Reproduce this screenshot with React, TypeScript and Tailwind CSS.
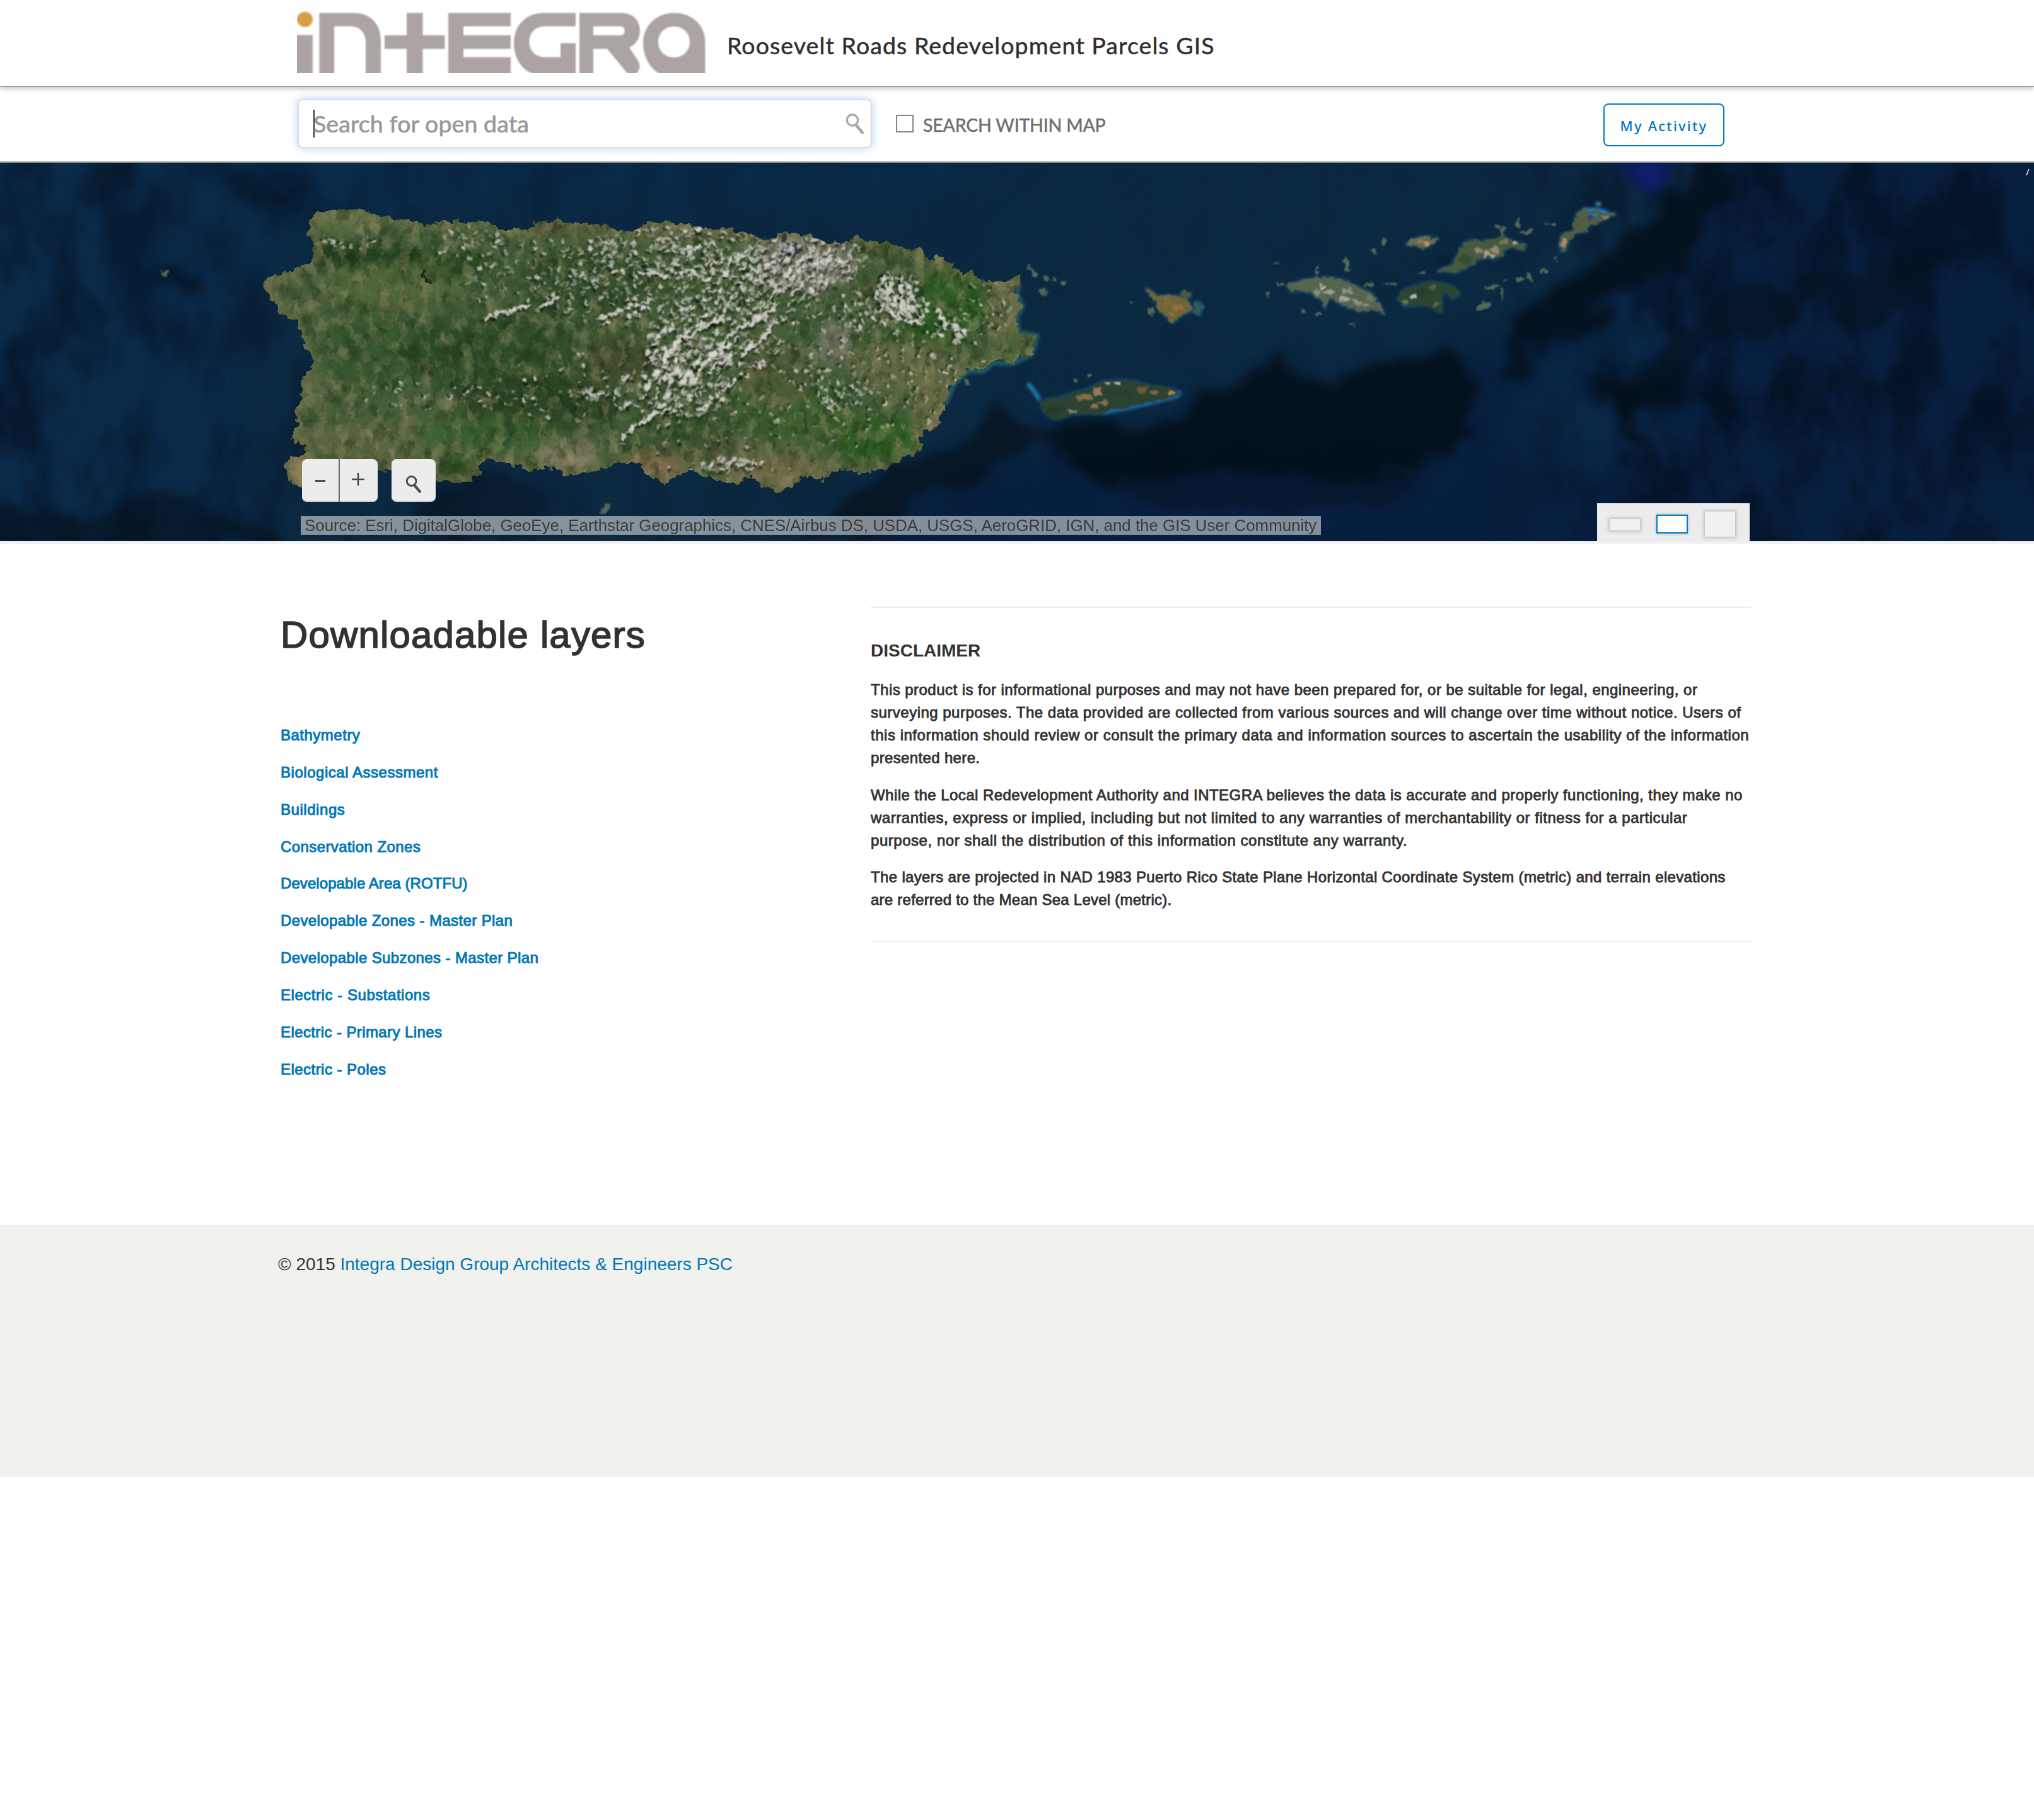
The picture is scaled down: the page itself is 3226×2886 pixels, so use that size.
import React from "react";

const PR =
  "M415 446L436 437L466 429L485 417L497 409L498 389L489 370L492 350L498 341L507 337L538 332L560 331L579 333L604 339L624 348L650 351L676 356L706 353L736 352L767 350L782 354L795 364L839 365L849 354L870 351L890 349L920 355L951 355L975 364L1002 368L1015 359L1028 354L1058 350L1080 355L1104 357L1130 364L1145 360L1165 369L1196 370L1203 378L1228 380L1241 368L1272 371L1312 384L1345 386L1353 375L1380 382L1410 384L1427 393L1459 396L1468 408L1482 414L1490 405L1502 414L1515 425L1533 434L1541 430L1552 443L1582 448L1605 445L1617 432L1620 443L1608 461L1622 486L1611 504L1614 527L1630 530L1645 532L1638 548L1637 562L1622 565L1605 575L1590 571L1576 573L1559 587L1536 586L1524 600L1513 607L1504 622L1499 643L1492 660L1490 675L1465 684L1460 700L1462 714L1448 720L1433 725L1421 736L1400 744L1381 749L1352 748L1330 743L1318 752L1307 761L1292 758L1278 754L1255 770L1232 780L1210 768L1186 755L1169 768L1145 762L1123 757L1108 752L1100 745L1089 746L1070 757L1056 767L1040 760L1022 750L1015 741L1007 734L982 734L960 741L936 750L915 750L895 755L892 747L885 743L865 742L844 748L828 743L813 734L788 734L778 723L770 730L757 739L762 748L752 757L727 766L691 761L655 755L619 746L594 746L540 752L500 745L482 775L470 768L460 765L456 754L452 740L456 729L470 725L484 721L484 704L461 698L465 685L471 671L469 657L476 645L479 632L477 618L479 604L488 590L497 571L490 560L484 546L476 526L471 507L441 496L434 482L425 468Z";

const ISLANDS = [
  "M2041 453L2060 446L2079 443L2100 440L2128 443L2146 453L2173 463L2187 480L2195 497L2180 489L2160 493L2140 488L2128 483L2115 473L2105 474L2101 489L2098 476L2084 467L2070 460L2048 463Z",
  "M2218 473L2227 460L2240 456L2254 450L2270 448L2289 450L2306 456L2314 467L2303 473L2291 460L2284 470L2286 484L2285 495L2270 485L2258 483L2240 484L2227 485Z",
  "M2280 430L2303 420L2310 408L2316 397L2320 388L2329 382L2350 383L2379 380L2384 372L2390 381L2410 385L2420 389L2416 397L2400 391L2387 393L2383 404L2370 410L2357 407L2343 413L2325 425L2307 433L2296 429Z",
  "M2231 387L2244 379L2262 375L2280 378L2272 386L2258 392Z",
  "M2475 397L2474 385L2477 373L2495 367L2497 355L2499 345L2503 338L2512 333L2524 336L2530 331L2545 338L2562 339L2540 350L2530 355L2519 355L2517 367L2500 369L2490 377L2486 388L2483 398Z",
  "M1818 457L1828 464L1835 471L1850 469L1865 470L1881 475L1886 484L1889 493L1874 500L1868 504L1861 512L1850 502L1838 489L1834 478Z",
  "M1872 466L1880 463L1889 468L1882 473Z",
  "M1895 480L1903 478L1907 488L1902 500L1895 496Z",
  "M1651 639L1662 634L1680 631L1703 623L1725 618L1749 605L1775 603L1800 605L1830 614L1863 618L1872 625L1845 633L1818 637L1790 645L1760 648L1748 656L1730 655L1700 656L1680 664L1668 662L1657 654Z",
];
const ISLAND_FILLS = ["#566450", "#2b4531", "#47593e", "#6b6a4c", "#525d43", "#6f6538", "#4f5a40", "#2f5a5a", "#2c4230"];

// [cx, cy, rx, ry, rotation]
const CAYS = [
  [2136, 419, 4, 12, -8], [2090, 428, 2, 9, 0], [2195, 385, 4, 6, 0], [2180, 397, 3, 3, 0],
  [2024, 417, 3, 3, 0], [2011, 467, 3, 5, 20], [2030, 450, 5, 2, 20], [2172, 452, 9, 3, 0],
  [2205, 450, 12, 2, -8], [2256, 432, 6, 3, -10], [2353, 486, 13, 5, -20], [2382, 465, 3, 10, 0],
  [2367, 455, 13, 3, -15], [2412, 442, 6, 4, -20], [2426, 439, 3, 9, -25], [2448, 430, 7, 3, -20],
  [2387, 446, 3, 2, 0], [2408, 354, 3, 9, 0], [2375, 360, 3, 4, 0], [2383, 365, 5, 7, 20],
  [2420, 368, 12, 3, -10], [2464, 356, 5, 2, 0], [2454, 356, 2, 2, 0], [2146, 514, 4, 2, 0],
  [2068, 493, 3, 3, 0], [2468, 408, 2, 4, 0], [1631, 424, 3, 3, 0], [1640, 432, 8, 4, 50],
  [1660, 441, 5, 3, 40], [1672, 444, 4, 3, 20], [1685, 449, 5, 3, 20], [1654, 462, 5, 7, 0],
  [1795, 478, 3, 3, 0], [1826, 493, 4, 8, 0], [262, 434, 5, 4, 0], [960, 807, 5, 11, 40],
  [1728, 595, 2, 4, 0], [1707, 604, 2, 3, 0], [1534, 606, 3, 5, 0], [2092, 497, 4, 3, 0],
];

// Patches of detail inside the smaller islands: [cx, cy, rx, ry, colour]
const SPECKS: [number, number, number, number, string][] = [
  [2098, 455, 6, 4, "#c9c8c0"], [2090, 463, 7, 4, "#8f9a84"], [2108, 463, 9, 5, "#a3a798"], [2138, 462, 12, 6, "#9a9e8c"],
  [2132, 474, 9, 4, "#b0b2a6"], [2152, 478, 9, 5, "#949a86"], [2172, 474, 8, 6, "#6f7a5c"], [2165, 484, 9, 4, "#a1a190"],
  [2120, 450, 8, 4, "#5d6a48"], [2062, 452, 12, 5, "#5a6745"], [2128, 478, 6, 3, "#7d8a76"],
  [2243, 470, 5, 4, "#c6ccc2"], [2228, 478, 6, 5, "#6f7f66"], [2255, 462, 14, 8, "#24402a"], [2272, 455, 8, 5, "#5f6a48"], [2278, 482, 5, 7, "#6a6b50"],
  [2325, 412, 12, 10, "#2f4c2c"], [2345, 398, 8, 6, "#a08d78"], [2358, 402, 7, 6, "#c2a695"], [2372, 396, 9, 7, "#a98f78"], [2368, 407, 6, 3, "#b9a596"], [2402, 386, 6, 4, "#c8ac9c"], [2385, 384, 8, 4, "#8a7d5e"],
  [2256, 384, 10, 4, "#97805a"], [2264, 388, 4, 3, "#c29a72"],
  [2481, 385, 4, 10, "#bd9176"], [2505, 352, 7, 9, "#4f5d3a"], [2530, 340, 9, 5, "#2277b8"], [2522, 345, 6, 4, "#1d3f8a"], [2546, 343, 7, 3, "#a0896a"],
  [1850, 482, 9, 6, "#8a6a35"], [1868, 488, 11, 6, "#9a7440"], [1858, 498, 6, 5, "#8b7a48"], [1848, 473, 6, 3, "#6a8a68"],
  [1672, 650, 14, 8, "#24392a"], [1722, 630, 16, 6, "#8f7450"], [1742, 620, 9, 8, "#a98360"], [1750, 638, 12, 5, "#8e7150"], [1735, 644, 8, 4, "#a07c5a"],
  [1778, 625, 22, 9, "#2b3d2c"], [1812, 618, 12, 7, "#7a6038"], [1832, 622, 10, 5, "#8a6c42"], [1858, 622, 8, 5, "#b59055"], [1772, 608, 6, 4, "#d5d0c8"], [1756, 608, 5, 4, "#c0a890"], [1700, 652, 10, 3, "#a58766"],
];

function makeRandom(seed: number) {
  let s = seed;
  return () => {
    s = (s * 1664525 + 1013904223) % 4294967296;
    return s / 4294967296;
  };
}

// [cx, cy, rx, ry, count, length, angle]
const CLOUD_FIELDS = [
  [1090, 400, 170, 44, 290, 5, -12],
  [740, 386, 60, 26, 45, 3.5, 30],
  [850, 440, 110, 62, 90, 4, -5],
  [1000, 460, 130, 60, 150, 4.5, -25],
  [1130, 540, 110, 80, 240, 6.5, -42],
  [1090, 600, 80, 60, 150, 6.5, -58],
  [1190, 460, 110, 60, 220, 5.5, -45],
  [1250, 430, 100, 44, 200, 6, -60],
  [1310, 412, 65, 45, 110, 5.5, -75],
  [1425, 470, 36, 42, 60, 7, 82],
  [1442, 500, 30, 14, 34, 7, 70],
  [1510, 515, 30, 26, 26, 6, 55],
  [1370, 490, 50, 35, 50, 5.5, 70],
  [1330, 600, 190, 110, 200, 4, 80],
  [1140, 700, 160, 60, 40, 3.5, -60],
  [900, 610, 110, 60, 50, 4, -60],
  [940, 624, 20, 12, 26, 6, 60],
  [1030, 620, 70, 60, 80, 5, -62],
  [700, 630, 150, 25, 34, 4, 60],
  [1160, 735, 50, 14, 34, 7, -45],
  [1500, 590, 70, 90, 34, 3.5, 60],
  [1560, 490, 50, 50, 30, 4, 60],
  [1350, 640, 50, 30, 30, 5.5, 40],
  [560, 385, 60, 10, 16, 3.5, 80],
];

const STREAKS = [
  [770, 503, 840, 487], [860, 486, 886, 474], [955, 505, 1035, 474], [1000, 500, 1030, 488],
  [990, 690, 1030, 660], [1020, 668, 1058, 640], [1055, 630, 1075, 570], [1080, 610, 1110, 570],
  [1100, 600, 1150, 540], [1060, 560, 1110, 510], [1125, 570, 1175, 535], [1080, 540, 1150, 500],
  [1110, 650, 1180, 590], [1160, 530, 1230, 490], [1402, 440, 1408, 478], [1414, 442, 1420, 490],
  [1428, 440, 1432, 495], [1440, 450, 1444, 500], [1418, 498, 1452, 512], [1466, 478, 1474, 496],
  [1488, 495, 1504, 512], [1510, 512, 1532, 530], [1025, 560, 1055, 520], [1180, 560, 1225, 520],
  [1020, 435, 1110, 432], [1090, 395, 1110, 388], [1125, 590, 1165, 560], [1040, 600, 1060, 560],
];

type Cloud = { x: number; y: number; w: number; h: number; a: number; o: number };

function buildClouds(): Cloud[] {
  const r = makeRandom(77);
  const out: Cloud[] = [];
  CLOUD_FIELDS.forEach(([cx, cy, rx, ry, n, len, ang]) => {
    for (let i = 0; i < n; i++) {
      const t = r() * Math.PI * 2;
      const d = Math.pow(r(), 0.6);
      out.push({
        x: Math.round(cx + Math.cos(t) * d * rx),
        y: Math.round(cy + Math.sin(t) * d * ry),
        w: +(len * (0.35 + r() * 0.6)).toFixed(1),
        h: +(1.4 + r() * 1.7).toFixed(1),
        a: Math.round(ang + (r() - 0.5) * 50),
        o: +(0.3 + r() * 0.55).toFixed(2),
      });
    }
  });
  STREAKS.forEach(([x1, y1, x2, y2]) => {
    const l = Math.hypot(x2 - x1, y2 - y1);
    const a = (Math.atan2(y2 - y1, x2 - x1) * 180) / Math.PI;
    for (let d = 0; d < l; d += 7) {
      out.push({
        x: Math.round(x1 + ((x2 - x1) * d) / l + (r() - 0.5) * 6),
        y: Math.round(y1 + ((y2 - y1) * d) / l + (r() - 0.5) * 6),
        w: 3 + Math.round(r() * 3),
        h: 2.8,
        a: Math.round(a),
        o: 0.85,
      });
    }
  });
  return out;
}

const CLOUDS = buildClouds();

// [cx, cy, rx, ry, colour, opacity]
const TERRAIN: [number, number, number, number, string, number][] = [
  [590, 405, 100, 18, "#22401d", 0.95], [730, 415, 70, 14, "#284722", 0.8], [560, 350, 70, 18, "#6b774a", 0.7],
  [620, 455, 110, 40, "#566a3c", 0.6], [510, 600, 22, 60, "#6c7350", 0.5], [600, 560, 110, 60, "#34562e", 0.8],
  [780, 560, 140, 60, "#2c4a27", 0.8], [860, 640, 130, 45, "#27401f", 0.8], [600, 700, 130, 32, "#5f6a44", 0.7],
  [780, 690, 120, 30, "#3a6032", 0.8], [900, 720, 50, 24, "#8a8168", 0.8], [1040, 735, 46, 26, "#7d6748", 0.85],
  [1230, 745, 80, 26, "#7b6b4c", 0.8], [1000, 366, 200, 14, "#6b6a4a", 0.7], [890, 362, 50, 9, "#2b3a1e", 0.8],
  [1280, 418, 80, 44, "#85817a", 0.8], [1322, 545, 26, 32, "#807a70", 0.8], [1510, 480, 60, 50, "#2c5a22", 0.85],
  [1480, 530, 60, 22, "#25521c", 0.9], [1390, 390, 36, 13, "#1f3b17", 0.95], [1590, 480, 26, 60, "#75704c", 0.6],
  [1440, 580, 90, 46, "#6e7048", 0.55], [1260, 640, 90, 60, "#39602c", 0.7], [1400, 695, 80, 36, "#2c5c22", 0.85],
  [1470, 650, 26, 60, "#7b704c", 0.6], [980, 570, 60, 40, "#3c4227", 0.6], [1080, 680, 90, 40, "#33502b", 0.7],
  [1150, 720, 60, 26, "#5b5b40", 0.5], [730, 748, 46, 18, "#2c4720", 0.95], [474, 738, 16, 28, "#97835c", 0.95],
  [930, 450, 120, 50, "#2c4725", 0.6], [1230, 600, 60, 50, "#5a5a3c", 0.5], [440, 460, 30, 26, "#66704a", 0.5],
];

function SatelliteMap() {
  return (
    <svg className="absolute inset-0 h-full w-full" viewBox="0 258 3226 600" preserveAspectRatio="none" aria-hidden="true">
      <defs>
        <clipPath id="mainIsland"><path d={PR} /></clipPath>
        <filter id="soft8" colorInterpolationFilters="sRGB" x="-20%" y="-20%" width="140%" height="140%"><feGaussianBlur stdDeviation="8" /></filter>
        <filter id="soft30" colorInterpolationFilters="sRGB" filterUnits="userSpaceOnUse" x="-100" y="158" width="3426" height="800"><feGaussianBlur stdDeviation="26" /></filter>
        <filter id="glow" colorInterpolationFilters="sRGB" x="-20%" y="-40%" width="140%" height="180%"><feGaussianBlur stdDeviation="2.5" /></filter>
        <filter id="rough" colorInterpolationFilters="sRGB" filterUnits="userSpaceOnUse" x="0" y="258" width="3226" height="600">
          <feTurbulence type="fractalNoise" baseFrequency="0.09" numOctaves="3" seed="4" result="n" />
          <feDisplacementMap in="SourceGraphic" in2="n" scale="16" xChannelSelector="R" yChannelSelector="G" />
        </filter>
        <filter id="ragged" colorInterpolationFilters="sRGB" filterUnits="userSpaceOnUse" x="0" y="258" width="3226" height="600">
          <feTurbulence type="fractalNoise" baseFrequency="0.12" numOctaves="2" seed="8" result="n" />
          <feDisplacementMap in="SourceGraphic" in2="n" scale="12" xChannelSelector="R" yChannelSelector="G" result="d" />
          <feGaussianBlur in="d" stdDeviation="0.8" />
        </filter>
        <filter id="ridge" colorInterpolationFilters="sRGB" filterUnits="userSpaceOnUse" x="-100" y="158" width="3426" height="800">
          <feTurbulence type="fractalNoise" baseFrequency="0.014 0.018" numOctaves="4" seed="9" result="n" />
          <feDisplacementMap in="SourceGraphic" in2="n" scale="90" xChannelSelector="R" yChannelSelector="G" result="d" />
          <feGaussianBlur in="d" stdDeviation="8" />
        </filter>
        <filter id="seaDark" colorInterpolationFilters="sRGB" x="0" y="0" width="100%" height="100%">
          <feTurbulence type="fractalNoise" baseFrequency="0.012 0.007" numOctaves="4" seed="21" />
          <feColorMatrix values="0 0 0 0 0.012  0 0 0 0 0.055  0 0 0 0 0.11  3.2 0 0 0 -1.3" />
        </filter>
        <filter id="landLight" colorInterpolationFilters="sRGB" x="0" y="0" width="100%" height="100%">
          <feTurbulence type="fractalNoise" baseFrequency="0.06 0.04" numOctaves="6" seed="3" />
          <feColorMatrix values="0 0 0 0 0.64  0 0 0 0 0.58  0 0 0 0 0.43  2.6 0 0 0 -1.2" />
        </filter>
        <filter id="landDark" colorInterpolationFilters="sRGB" x="0" y="0" width="100%" height="100%">
          <feTurbulence type="fractalNoise" baseFrequency="0.06 0.04" numOctaves="6" seed="12" />
          <feColorMatrix values="0 0 0 0 0.06  0 0 0 0 0.14  0 0 0 0 0.05  0 2.4 0 0 -1.05" />
        </filter>
        <linearGradient id="fadeRight" x1="0" x2="1" y1="0" y2="0">
          <stop offset="0" stopColor="#fff" stopOpacity="0.6" />
          <stop offset="0.13" stopColor="#fff" stopOpacity="0.35" />
          <stop offset="0.3" stopColor="#fff" stopOpacity="0.18" />
          <stop offset="0.5" stopColor="#fff" stopOpacity="0.05" />
          <stop offset="0.72" stopColor="#fff" stopOpacity="0.08" />
          <stop offset="0.83" stopColor="#fff" stopOpacity="0.7" />
          <stop offset="1" stopColor="#fff" stopOpacity="0.7" />
        </linearGradient>
        <mask id="seaMask"><rect x="0" y="258" width="3226" height="600" fill="url(#fadeRight)" /></mask>
      </defs>

      <rect x="0" y="258" width="3226" height="600" fill="#0c2942" />
      <g filter="url(#soft30)">
        <path d="M-100 158H1700L1500 320L900 320L480 340L380 520L400 958H-100Z" fill="#0b2a49" />
        <path d="M2760 158H3426V958H1240L1500 760L1700 700L2050 610L2300 590L2450 500L2640 400Z" fill="#082040" />
        <path d="M2430 580L2540 480L2720 440L2600 640L2680 740L2400 740Z" fill="#0a2748" />
      </g>
      <g mask="url(#seaMask)"><rect x="0" y="258" width="3226" height="600" filter="url(#seaDark)" /></g>

      <g filter="url(#ridge)" fill="#040f1a">
        <path d="M1970 600L2040 580L2130 595L2220 590L2300 550L2340 610L2310 710L2220 750L2010 755L1740 760L1640 690L1710 670L1830 680L1930 640Z" opacity="0.85" />
        <path d="M1700 720L2300 720L2200 820L1800 800Z" opacity="0.4" />
        <path d="M2695 258L2760 258L2720 340L2660 400L2570 480L2480 535L2410 560L2385 520L2430 474L2530 411L2654 314Z" opacity="0.8" />
        <path d="M2385 490H2412V610H2393Z" opacity="0.8" />
        <path d="M3075 410L3055 470L2940 530L2880 490L2740 530L2690 560L2640 640L2560 650L2590 590L2670 515L2750 460Z" opacity="0.55" />
        <path d="M2560 610H2596V730H2572Z" opacity="0.85" />
        <path d="M2510 600L2690 600L2750 660L2630 640L2520 650Z" opacity="0.55" />
        <path d="M1600 640L1660 690L1550 740L1450 800L1390 868H1270L1320 800L1440 740L1530 690Z" opacity="0.7" />
        <path d="M2820 560L3000 600L2960 640L2840 620Z" opacity="0.45" />
        <path d="M3120 680L3246 640V710L3160 730Z" opacity="0.45" />
        <path d="M330 258L390 258L480 310L470 345L420 320Z" opacity="0.5" />
        <path d="M-20 878V800L130 815L270 785L410 830L490 878Z" opacity="0.55" />
        <path d="M680 780L800 760L890 790L830 840H650Z" opacity="0.45" />
        <path d="M245 430H325V465H250Z" opacity="0.6" />
        <path d="M130 258H220L190 330H120Z" opacity="0.4" />
        <path d="M2280 400L2302 395L2292 430L2270 437Z" opacity="0.5" />
      </g>
      <path d="M2553 250H2654L2646 285L2622 308L2595 294L2572 278Z" fill="#0d1c58" filter="url(#soft8)" />
      <path d="M2590 262H2640L2628 298L2606 290Z" fill="#101f78" filter="url(#soft8)" opacity="0.8" />
      <path d="M3214 278L3218 268" stroke="#b9c4cc" strokeWidth="2" />

      <g filter="url(#glow)" fill="none" strokeLinejoin="round">
        <path d="M1605 445L1616 452L1612 465L1622 486L1612 504L1616 527L1645 532L1637 562L1605 577L1576 575L1559 589L1536 588L1513 609L1499 643" stroke="#2b7070" strokeWidth="7" opacity="0.75" />
        {ISLANDS.map((d, i) => (
          <path key={i} d={d} stroke="#2376a8" strokeWidth="4" opacity="0.55" />
        ))}
        <path d="M1630 608L1640 620L1649 634" stroke="#1e86c4" strokeWidth="6" />
        <path d="M2510 333L2535 334L2550 338" stroke="#1f8be0" strokeWidth="7" />
        <path d="M2535 321V326" stroke="#58b6c8" strokeWidth="7" />
        <path d="M1750 655L1818 641L1868 628L1872 620" stroke="#2b7fd0" strokeWidth="5" opacity="0.8" />
      </g>

      <g filter="url(#rough)">
        <g clipPath="url(#mainIsland)">
          <rect x="400" y="320" width="1260" height="470" fill="#455e39" />
          <g filter="url(#soft8)">
            {TERRAIN.map(([cx, cy, rx, ry, fill, o], i) => (
              <ellipse key={i} cx={cx} cy={cy} rx={rx} ry={ry} fill={fill} opacity={o} />
            ))}
            <path d={PR} fill="none" stroke="#7d754f" strokeWidth="16" opacity="0.65" />
          </g>
          <rect x="400" y="320" width="1260" height="470" filter="url(#landDark)" opacity="0.5" />
          <rect x="400" y="320" width="1260" height="470" filter="url(#landLight)" opacity="0.5" />
          <path d="M670 426L675 440L687 447L679 451L668 442Z" fill="#1c2a1c" />
          <path d="M1243 370L1255 386L1275 392L1262 404L1235 414L1215 420L1240 402L1238 382Z" fill="#24343c" opacity="0.85" />
        </g>
      </g>
      <g clipPath="url(#mainIsland)">
        <g filter="url(#ragged)">
          <g fill="#0a140a">
            {CLOUDS.map((c, i) => (
              <ellipse key={i} cx={c.x - 4} cy={c.y + 3} rx={c.w} ry={c.h} opacity={+(c.o * 0.75).toFixed(2)} transform={`rotate(${c.a} ${c.x} ${c.y})`} />
            ))}
          </g>
          <g fill="#dcdad2">
            {CLOUDS.map((c, i) => (
              <ellipse key={i} cx={c.x} cy={c.y} rx={c.w} ry={c.h} opacity={c.o} transform={`rotate(${c.a} ${c.x} ${c.y})`} />
            ))}
          </g>
        </g>
      </g>

      <g filter="url(#ragged)">
        {ISLANDS.map((d, i) => (
          <path key={i} d={d} fill={ISLAND_FILLS[i]} stroke={ISLAND_FILLS[i]} strokeWidth="2" />
        ))}
        {SPECKS.map(([x, y, rx, ry, fill], i) => (
          <ellipse key={i} cx={x} cy={y} rx={rx * 0.85} ry={ry * 0.8} fill={fill} opacity="0.85" />
        ))}
        {CAYS.map(([x, y, rx, ry, a], i) => (
          <ellipse key={i} cx={x} cy={y} rx={rx} ry={ry} fill="#62745c" opacity="0.85" transform={`rotate(${a} ${x} ${y})`} />
        ))}
      </g>
    </svg>
  );
}

function Logo() {
  return (
    <svg className="mt-[17px] h-[99px] w-[649px] shrink-0" viewBox="0 0 649 99" role="img" aria-label="Integra">
      <defs>
        <filter id="logoSoft" colorInterpolationFilters="sRGB" x="-2%" y="-5%" width="104%" height="110%"><feGaussianBlur stdDeviation="1.2" /></filter>
      </defs>
      <g filter="url(#logoSoft)" fill="#aca4a3">
        <ellipse cx="12.5" cy="13.7" rx="12.5" ry="12" fill="#d79e45" />
        <rect x="-3" y="38.5" width="28" height="65" />
        <path d="M35.500 103V3.500H90C117 3.500 133 22 133 47V103H109V50C109 35 100 24.700 84 24.700H59V103Z" />
        <path d="M174 3.500H199.500V39H234.500V60.500H199.500V103H174V60.500H139V39H174Z" />
        <path d="M240 3.500H339V24.700H264V39H339V60.500H264V73.700H339V103H240Z" />
        <path d="M442 3.500V24.700H394C378 24.700 368.500 35 368.500 49C368.500 63 378 73.700 394 73.700H418V51.500H442V103H392C362 103 344 80 344 52C344 24 362 3.500 392 3.500Z" />
        <path fillRule="evenodd" d="M448 3.500H514C533 3.500 544 15 544 32C544 44 537 54 527 58.500L541 79C547 89 542 103 527 103L492 60.500H470V103H448ZM470 24.700V39H513C522 39 522 24.700 513 24.700Z" />
        <path fillRule="evenodd" d="M598 3.500C570 3.500 549 24 549 51C549 78 566 103 590 103H647.500V50C647.500 22 626 3.500 598 3.500ZM598 25C612 25 623 35 623 49.500C623 64 612 74 598 74C584 74 573 64 573 49.500C573 35 584 25 598 25Z" />
      </g>
    </svg>
  );
}

function Magnifier({ className }: { className: string }) {
  return (
    <svg className={className} viewBox="0 0 30 33" fill="none" stroke="currentColor" aria-hidden="true">
      <circle cx="11" cy="10.500" r="8.700" strokeWidth="3.400" />
      <path d="M16.500 18L26.500 30" strokeWidth="5" strokeLinecap="round" />
    </svg>
  );
}

const LAYERS: [string, string][] = [
  ["Bathymetry", "tracking-[0.500px]"],
  ["Biological Assessment", "tracking-[0.530px]"],
  ["Buildings", "tracking-[0.550px]"],
  ["Conservation Zones", "tracking-[0.410px]"],
  ["Developable Area (ROTFU)", "tracking-[0.080px]"],
  ["Developable Zones - Master Plan", "tracking-[0.390px]"],
  ["Developable Subzones - Master Plan", "tracking-[0.380px]"],
  ["Electric - Substations", "tracking-[0.540px]"],
  ["Electric - Primary Lines", "tracking-[0.400px]"],
  ["Electric - Poles", "tracking-[0.460px]"],
];

const DISCLAIMER: [string, string][][] = [
  [
    ["This product is for informational purposes and may not have been prepared for, or be suitable for legal, engineering, or", "tracking-[0.455px]"],
    ["surveying purposes. The data provided are collected from various sources and will change over time without notice. Users of", "tracking-[0.490px]"],
    ["this information should review or consult the primary data and information sources to ascertain the usability of the information", "tracking-[0.525px]"],
    ["presented here.", "tracking-[0.350px]"],
  ],
  [
    ["While the Local Redevelopment Authority and INTEGRA believes the data is accurate and properly functioning, they make no", "tracking-[0.450px]"],
    ["warranties, express or implied, including but not limited to any warranties of merchantability or fitness for a particular", "tracking-[0.525px]"],
    ["purpose, nor shall the distribution of this information constitute any warranty.", "tracking-[0.540px]"],
  ],
  [
    ["The layers are projected in NAD 1983 Puerto Rico State Plane Horizontal Coordinate System (metric) and terrain elevations", "tracking-[0.345px]"],
    ["are referred to the Mean Sea Level (metric).", "tracking-[0.240px]"],
  ],
];

export default function App() {
  return (
    <div className="min-h-[2886px] w-full bg-white font-['Liberation_Sans',Arial,sans-serif] text-[#323232]">
      <header className="relative z-10 flex h-[138px] border-b-2 border-[#a3a3a3] bg-white pl-[471px] shadow-[0_2px_8px_rgba(0,0,0,0.28)]">
        <Logo />
        <h1 className="ml-[33px] mt-[47px] whitespace-nowrap font-['Lato',sans-serif] text-[37.500px] leading-[50px] tracking-[1.060px] text-[#2f2f2f] [-webkit-text-stroke:0.500px_#2f2f2f]">
          Roosevelt Roads Redevelopment Parcels GIS
        </h1>
      </header>

      <div className="flex h-[120px] items-start border-b-2 border-[#9a9c9b] bg-white pl-[472px]">
        <div className="mt-[19px] flex h-[78px] w-[911px] items-center rounded-[8px] border-2 border-[#dcdcdc] bg-white pl-[23px] pr-[10px] shadow-[0_0_14px_rgba(120,185,245,0.6)]">
          <span className="h-[44px] w-[2px] bg-[#333]" />
          <span className="-ml-[2px] whitespace-nowrap font-['Lato',sans-serif] text-[37.500px] leading-[50px] tracking-[0.080px] text-[#999] [-webkit-text-stroke:0.700px_#999]">Search for open data</span>
          <Magnifier className="ml-auto h-[33px] w-[30px] text-[#aaa]" />
        </div>
        <div className="ml-[38px] mt-[44px] h-[28px] w-[28px] border-2 border-[#858585]" />
        <span className="ml-[15px] mt-[40px] whitespace-nowrap font-['Lato',sans-serif] text-[28.500px] leading-[40px] tracking-[-0.180px] text-[#6e6e6e] [-webkit-text-stroke:0.500px_#6e6e6e]">SEARCH WITHIN MAP</span>
        <button className="ml-auto mr-[491px] mt-[26px] h-[68px] w-[192px] shrink-0 rounded-[8px] border-2 border-[#007ac2] pt-[3px] font-['Noto_Sans',sans-serif] text-[22px] font-medium tracking-[2.200px] text-[#0074c0]">
          My Activity
        </button>
      </div>

      <section className="relative h-[604px] overflow-hidden border-b-4 border-[#efefef] bg-[#0c2943]">
        <SatelliteMap />
        <div className="absolute left-[479px] top-[470px] flex h-[68px]">
          <div className="flex w-[120px] rounded-[8px] border-b-2 border-[#ccc] bg-[#ececec]">
            <span className="flex h-[68px] w-[58px] items-center justify-center"><span className="h-[3px] w-[16px] bg-[#4c4c4c]" /></span>
            <span className="h-[68px] w-[2px] bg-[#6b6b6b]" />
            <span className="flex h-[64px] w-[57px] items-center justify-center">
              <svg className="h-[22px] w-[22px]" viewBox="0 0 22 22" stroke="#4c4c4c" strokeWidth="2.600"><path d="M1 11H21M11 1V21" /></svg>
            </span>
          </div>
          <div className="ml-[22px] flex w-[70px] justify-center rounded-[8px] border-b-2 border-[#ccc] bg-[#ececec] pt-[26px]">
            <Magnifier className="h-[28px] w-[26px] text-[#4c4c4c]" />
          </div>
        </div>
        <div className="absolute left-[477px] top-[560px] flex h-[30px] w-[1618px] items-center whitespace-nowrap bg-white/50 pl-[6px] text-[25.870px] leading-[30px] text-[#323232]/90">
          Source: Esri, DigitalGlobe, GeoEye, Earthstar Geographics, CNES/Airbus DS, USDA, USGS, AeroGRID, IGN, and the GIS User Community
        </div>
        <div className="absolute left-[2533px] top-[540px] flex h-[64px] w-[242px] items-start bg-[#ececec] pl-[20px]">
          <span className="mt-[25px] h-[18px] w-[48px] bg-[#f0f0f0] shadow-[0_0_5px_2px_rgba(0,0,0,0.2)]" />
          <span className="ml-[26px] mt-[18px] h-[30px] w-[50px] border-2 border-[#007ac2] bg-white shadow-[0_0_5px_rgba(0,0,0,0.25)]" />
          <span className="ml-[27px] mt-[13px] h-[40px] w-[48px] bg-[#f0f0f0] shadow-[0_0_5px_2px_rgba(0,0,0,0.2)]" />
        </div>
      </section>

      <main className="flex h-[1080px] pl-[445px]">
        <div className="w-[936px]">
          <h2 className="mt-[110px] whitespace-nowrap text-[60px] leading-[70px] tracking-[1.150px] [-webkit-text-stroke:1.600px_#323232]">Downloadable layers</h2>
          <ul className="mt-[106px]">
            {LAYERS.map(([name, tracking]) => (
              <li key={name} className="h-[58.850px] whitespace-nowrap text-[24px] leading-[36px] text-[#0076b6] [-webkit-text-stroke:0.950px_#0076b6]">
                <a className={tracking}>{name}</a>
              </li>
            ))}
          </ul>
        </div>
        <div className="mt-[100px] h-[532px] w-[1396px] border-y-2 border-[#ececec] pt-[50px]">
          <h3 className="text-[28px] font-bold leading-[36px]">DISCLAIMER</h3>
          <div className="mt-[26px] flex flex-col gap-[22.500px] text-[24px] leading-[36px] [-webkit-text-stroke:0.850px_#323232]">
            {DISCLAIMER.map((lines, i) => (
              <p key={i}>
                {lines.map(([line, tracking]) => (
                  <span key={line} className={`block whitespace-nowrap ${tracking}`}>{line}</span>
                ))}
              </p>
            ))}
          </div>
        </div>
      </main>

      <footer className="h-[400px] bg-[#f1f2ed] pl-[441px] pt-[45px] text-[28px] leading-[36px]">
        © 2015 <a className="text-[#0076b6]">Integra Design Group Architects &amp; Engineers PSC</a>
      </footer>
    </div>
  );
}
